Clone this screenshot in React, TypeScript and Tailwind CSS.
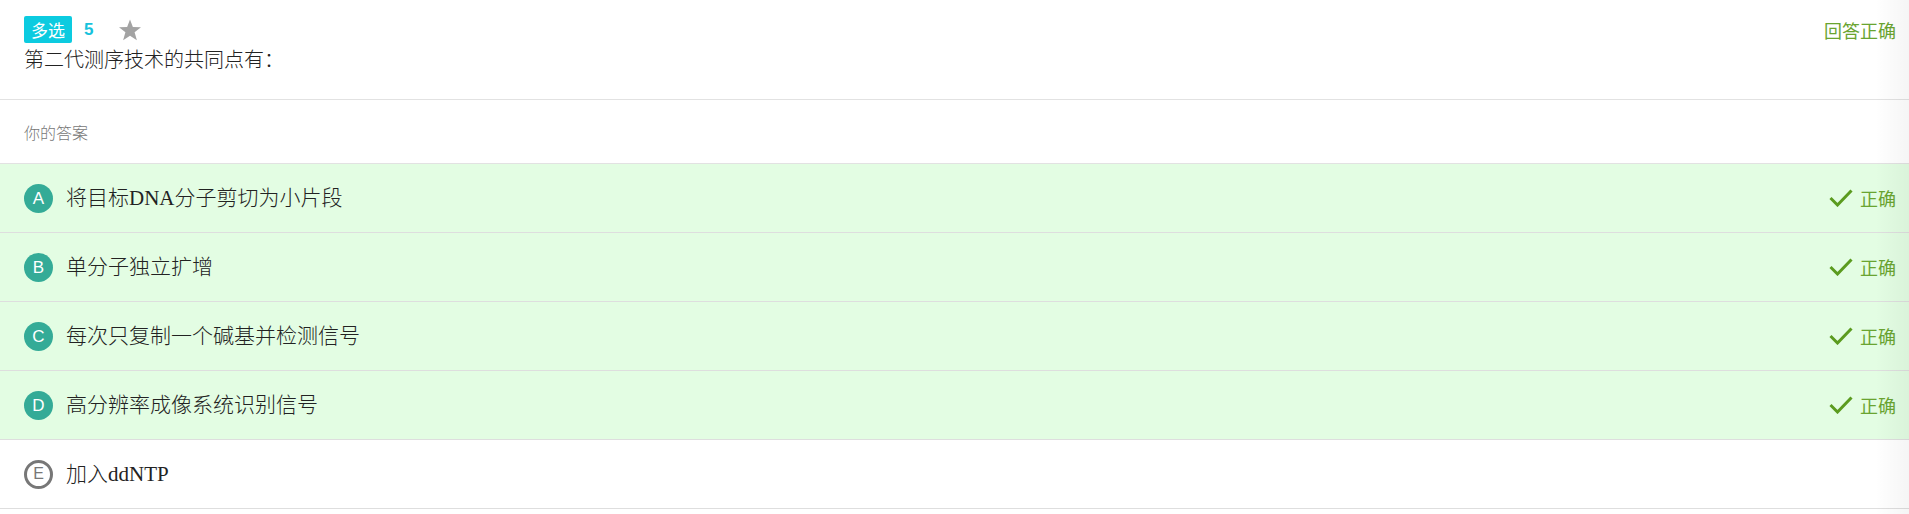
import React from "react";

const options = [
  { key: "A", text: "将目标DNA分子剪切为小片段", correct: true },
  { key: "B", text: "单分子独立扩增", correct: true },
  { key: "C", text: "每次只复制一个碱基并检测信号", correct: true },
  { key: "D", text: "高分辨率成像系统识别信号", correct: true },
  { key: "E", text: "加入ddNTP", correct: false },
];

function Check() {
  return (
    <svg width="24" height="18" viewBox="0 0 24 18" className="block">
      <polyline points="1.5,9 8.5,16 22.5,1.5" fill="none" stroke="#5b9b1f" strokeWidth="3" strokeLinecap="butt" strokeLinejoin="miter" />
    </svg>
  );
}

function Star() {
  return (
    <svg width="24" height="22" viewBox="0 0 24 23" className="block">
      <polygon points="12,0.5 15,8.3 23.5,8.6 16.8,13.9 19.2,22.2 12,17.4 4.8,22.2 7.2,13.9 0.5,8.6 9,8.3" fill="#a3a3a3" />
    </svg>
  );
}

export default function App() {
  return (
    <div className="relative w-full min-h-[514px] bg-white">
      <div className="h-[100px] border-b border-[#e2e2e2] pl-6 pr-[13px] pt-4">
        <div className="flex items-center justify-between h-[27px]">
          <div className="flex items-center">
            <span className="flex items-center h-[27px] px-[7px] rounded-[2px] bg-[#0ccbe0] text-white text-[17px] leading-none" style={{ fontFamily: '"Noto Sans CJK SC", sans-serif' }}>
              多选
            </span>
            <span className="ml-[12px] text-[#17c2dc] text-[17px] font-bold leading-none" style={{ fontFamily: '"Liberation Sans", Arial, sans-serif' }}>
              5
            </span>
            <span className="ml-[25px]">
              <Star />
            </span>
          </div>
          <span className="text-[18px] text-[#6aa430] leading-none" style={{ fontFamily: '"Noto Sans CJK SC", sans-serif' }}>
            回答正确
          </span>
        </div>
        <div className="mt-[2px] text-[20px] font-light leading-[28px] text-[#222]" style={{ fontFamily: '"Noto Sans CJK SC", sans-serif' }}>
          第二代测序技术的共同点有：
        </div>
      </div>
      <div className="h-[64px] border-b border-[#e2e2e2] pl-6 flex items-center text-[16px] font-light text-[#777]" style={{ fontFamily: '"Noto Sans CJK SC", sans-serif' }}>
        你的答案
      </div>
      {options.map((o) => (
        <div
          key={o.key}
          className={
            "h-[69px] border-b border-[#dedede] pl-6 pr-[13px] flex items-center justify-between " +
            (o.correct ? "bg-[#e3fde3]" : "bg-white")
          }
        >
          <div className="flex items-center">
            {o.correct ? (
              <span className="flex items-center justify-center w-[29px] h-[29px] rounded-full bg-[#34ab97] text-white text-[17px] leading-none" style={{ fontFamily: '"Liberation Sans", Arial, sans-serif' }}>
                {o.key}
              </span>
            ) : (
              <span className="flex items-center justify-center w-[29px] h-[29px] rounded-full border-[3px] border-[#777] bg-white text-[#777] text-[16px] leading-none" style={{ fontFamily: '"Liberation Sans", Arial, sans-serif' }}>
                {o.key}
              </span>
            )}
            <span className="ml-[13px] text-[21px] font-light leading-none text-[#222]" style={{ fontFamily: '"Liberation Serif", "Noto Sans CJK SC", serif' }}>
              {o.text}
            </span>
          </div>
          {o.correct && (
            <div className="flex items-center">
              <Check />
              <span className="ml-[7px] text-[18px] text-[#6aa430] leading-none" style={{ fontFamily: '"Noto Sans CJK SC", sans-serif' }}>
                正确
              </span>
            </div>
          )}
        </div>
      ))}
      <div className="pointer-events-none absolute right-0 top-0 h-[514px] w-[34px] bg-gradient-to-r from-transparent to-black/[0.04]" />
    </div>
  );
}
